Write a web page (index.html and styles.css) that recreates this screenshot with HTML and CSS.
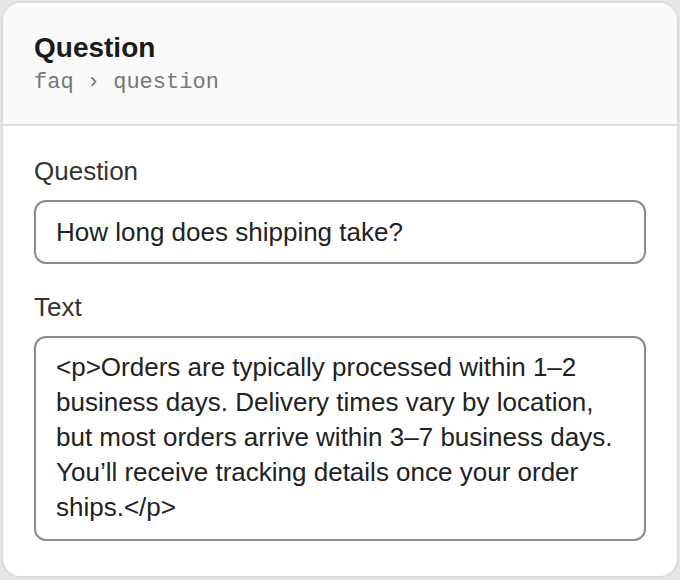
FILE: index.html
```html
<!DOCTYPE html>
<html>
<head>
<meta charset="utf-8">
<link rel="stylesheet" href="styles.css">
</head>
<body>
<div class="card">
  <div class="header">
    <div class="title">Question</div>
    <div class="crumb">faq › question</div>
  </div>
  <div class="body">
    <div class="field">
      <div class="label">Question</div>
      <div class="input">How long does shipping take?</div>
    </div>
    <div class="field">
      <div class="label">Text</div>
      <div class="textarea">&lt;p&gt;Orders are typically processed within 1–2<br>business days. Delivery times vary by location,<br>but most orders arrive within 3–7 business days.<br>You’ll receive tracking details once your order<br>ships.&lt;/p&gt;</div>
    </div>
  </div>
</div>
</body>
</html>
```
FILE: styles.css
```css
* { box-sizing: border-box; }
html, body { margin: 0; }
body {
  background: #e6e6e6;
  padding: 1px;
  font-family: "Liberation Sans", Arial, sans-serif;
  color: #222;
}
.card {
  width: 678px;
  height: 577px;
  border: 2px solid #dcdcdc;
  border-radius: 20px;
  background: #fff;
  overflow: hidden;
}
.header {
  background: #fafafa;
  border-bottom: 2px solid #e0e0e0;
  padding: 29px 31px 28px;
}
.title {
  font-size: 28px;
  line-height: 32px;
  font-weight: bold;
  color: #1a1a1a;
}
.crumb {
  margin-top: 6px;
  font-family: "Liberation Mono", "Courier New", monospace;
  font-size: 22px;
  line-height: 26px;
  color: #777;
}
.body {
  padding: 30px 31px 0;
}
.field + .field { margin-top: 28px; }
.label {
  font-size: 26px;
  line-height: 30px;
  color: #333;
  margin-bottom: 14px;
}
.input {
  height: 64px;
  border: 2px solid #8a8a8a;
  border-radius: 12px;
  padding: 0 20px;
  display: flex;
  align-items: center;
  font-size: 26px;
  color: #222;
}
.textarea {
  border: 2px solid #8a8a8a;
  border-radius: 12px;
  padding: 12px 20px 14px;
  font-size: 26px;
  line-height: 35px;
  color: #222;
}
```
